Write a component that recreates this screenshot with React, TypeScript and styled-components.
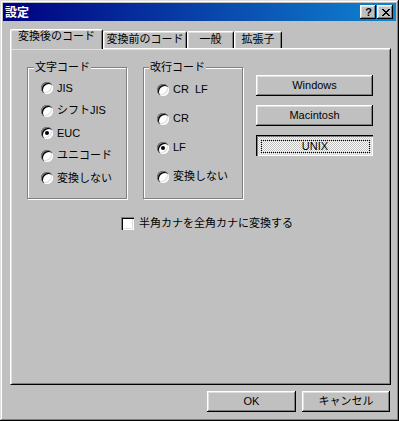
import React from "react";
import styled, { createGlobalStyle } from "styled-components";

const GlobalStyle = createGlobalStyle`
  html, body {
    margin: 0;
    padding: 0;
    background: #c0c0c0;
  }
  body {
    font-family: "Liberation Sans", "Noto Sans CJK JP", sans-serif;
    font-size: 11px;
    color: #000;
  }
`;

const Window = styled.div`
  width: 399px;
  height: 421px;
  box-sizing: border-box;
  padding: 3px;
  background: #c0c0c0;
  box-shadow: inset -1px -1px #000, inset 1px 1px #dfdfdf,
    inset -2px -2px #808080, inset 2px 2px #fff;
  display: flex;
  flex-direction: column;
`;

const TitleBar = styled.div`
  height: 18px;
  flex: none;
  display: flex;
  align-items: center;
  padding: 0 3px 0 2px;
  background: linear-gradient(90deg, #000080, #1084d0);
`;

const TitleText = styled.span`
  flex: 1;
  color: #fff;
  font-family: "Noto Sans CJK JP", sans-serif;
  font-weight: bold;
  font-size: 12px;
  line-height: 18px;
`;

const CaptionButtons = styled.div`
  display: flex;
  gap: 1px;
`;

const CaptionButton = styled.div`
  width: 16px;
  height: 14px;
  box-sizing: border-box;
  background: #c0c0c0;
  box-shadow: inset -1px -1px #000, inset 1px 1px #fff,
    inset -2px -2px #808080, inset 2px 2px #dfdfdf;
  display: flex;
  align-items: center;
  justify-content: center;
  font-family: "Liberation Sans", sans-serif;
  font-weight: bold;
  font-size: 11px;
  line-height: 14px;
  padding-left: 1px;
`;

const Body = styled.div`
  flex: 1;
  display: flex;
  flex-direction: column;
  padding: 8px 5px 0 7px;
`;

const TabStrip = styled.div`
  display: flex;
  align-items: flex-end;
  height: 20px;
  margin-bottom: -1px;
  position: relative;
  z-index: 1;
`;

const Tab = styled.div<{ $active?: boolean; $width: number }>`
  width: ${(p) => p.$width}px;
  height: ${(p) => (p.$active ? 20 : 17)}px;
  margin-bottom: ${(p) => (p.$active ? 0 : 1)}px;
  box-sizing: border-box;
  border-top: 1px solid #fff;
  border-left: 1px solid #fff;
  border-right: 1px solid #000;
  border-radius: 2px 2px 0 0;
  box-shadow: inset 1px 1px #dfdfdf, inset -1px 0 #808080;
  background: #c0c0c0;
  padding-top: ${(p) => (p.$active ? 0 : 1)}px;
  text-align: center;
  line-height: 13px;
  white-space: nowrap;
  position: relative;
  z-index: ${(p) => (p.$active ? 2 : 1)};
`;

const Panel = styled.div`
  height: 337px;
  flex: none;
  box-sizing: border-box;
  border-style: solid;
  border-width: 1px;
  border-color: #fff #000 #000 #fff;
  box-shadow: inset 1px 1px #dfdfdf, inset -1px -1px #808080;
  padding: 18px 0 0 16px;
`;

const TopRow = styled.div`
  display: flex;
  align-items: flex-start;
`;

const GroupBox = styled.div`
  position: relative;
  width: 100px;
  height: 132px;
  box-sizing: border-box;
  border: 1px solid #808080;
  box-shadow: inset 1px 1px #fff, 1px 1px #fff;

  & + & {
    margin-left: 16px;
  }
`;

const GroupTitle = styled.span<{ $left: number }>`
  position: absolute;
  top: -7px;
  left: ${(p) => p.$left}px;
  padding: 0 1px;
  background: #c0c0c0;
  line-height: 13px;
`;

const RadioList = styled.div<{ $row: number; $top: number }>`
  display: flex;
  flex-direction: column;
  padding: ${(p) => p.$top}px 0 0 ${13}px;

  & > * {
    height: ${(p) => p.$row}px;
  }
`;

const RadioRow = styled.label`
  display: flex;
  align-items: center;
  gap: 4px;
  line-height: 13px;
  white-space: nowrap;
`;

const RadioCircle = styled.span<{ $checked?: boolean }>`
  position: relative;
  width: 12px;
  height: 12px;
  flex: none;
  border-radius: 50%;
  background: #fff;
  box-shadow: inset 1px 1px #808080, inset 2px 2px #000,
    inset -1px -1px #fff, inset -2px -2px #dfdfdf;

  &::after {
    content: "";
    display: ${(p) => (p.$checked ? "block" : "none")};
    position: absolute;
    left: 4px;
    top: 4px;
    width: 4px;
    height: 4px;
    border-radius: 50%;
    background: #000;
  }
`;

const ButtonColumn = styled.div`
  display: flex;
  flex-direction: column;
  gap: 9px;
  margin: 8px 0 0 13px;
`;

const Button = styled.div<{ $width: number; $pressed?: boolean }>`
  width: ${(p) => p.$width}px;
  height: 21px;
  box-sizing: border-box;
  display: flex;
  align-items: center;
  justify-content: center;
  background-color: ${(p) => (p.$pressed ? "#fff" : "#c0c0c0")};
  background-image: ${(p) =>
    p.$pressed
      ? "repeating-conic-gradient(#c0c0c0 0% 25%, #fff 0% 50%)"
      : "none"};
  background-size: 2px 2px;
  box-shadow: ${(p) =>
    p.$pressed
      ? "inset 1px 1px #000, inset 2px 2px #808080, inset -1px -1px #fff, inset -2px -2px #dfdfdf"
      : "inset -1px -1px #000, inset 1px 1px #fff, inset -2px -2px #808080, inset 2px 2px #dfdfdf"};
  padding: ${(p) => (p.$pressed ? "1px 0 0 1px" : "0")};
  white-space: nowrap;
  line-height: 13px;
`;

const FocusRect = styled.span`
  box-sizing: border-box;
  width: calc(100% - 7px);
  height: calc(100% - 7px);
  border: 1px dotted #000;
  display: flex;
  align-items: center;
  justify-content: center;
`;

const CheckRow = styled.label`
  display: flex;
  align-items: center;
  gap: 5px;
  margin-top: 18px;
  padding-left: 94px;
  line-height: 13px;
`;

const CheckBox = styled.span`
  width: 13px;
  height: 13px;
  flex: none;
  box-sizing: border-box;
  background: #fff;
  box-shadow: inset 1px 1px #808080, inset 2px 2px #000,
    inset -1px -1px #fff, inset -2px -2px #dfdfdf;
`;

const Footer = styled.div`
  display: flex;
  justify-content: flex-end;
  gap: 6px;
  margin-top: 6px;
  padding-right: 1px;
`;

const charsets = ["JIS", "シフトJIS", "EUC", "ユニコード", "変換しない"];
const newlines = ["CR\u00a0\u00a0LF", "CR", "LF", "変換しない"];

function CloseGlyph() {
  return (
    <svg width="8" height="7" viewBox="0 0 8 7" shapeRendering="crispEdges">
      <path
        d="M0 0h2v1h-2zM6 0h2v1h-2zM1 1h2v1h-2zM5 1h2v1h-2zM2 2h4v1h-4zM3 3h2v1h-2zM2 4h4v1h-4zM1 5h2v1h-2zM5 5h2v1h-2zM0 6h2v1h-2zM6 6h2v1h-2z"
        fill="#000"
      />
    </svg>
  );
}

export default function App() {
  return (
    <>
      <GlobalStyle />
      <Window>
        <TitleBar>
          <TitleText>設定</TitleText>
          <CaptionButtons>
            <CaptionButton>?</CaptionButton>
            <CaptionButton>
              <CloseGlyph />
            </CaptionButton>
          </CaptionButtons>
        </TitleBar>
        <Body>
          <TabStrip>
            <Tab $active $width={93}>
              変換後のコード
            </Tab>
            <Tab $width={84}>変換前のコード</Tab>
            <Tab $width={47}>一般</Tab>
            <Tab $width={48}>拡張子</Tab>
          </TabStrip>
          <Panel>
            <TopRow>
              <GroupBox>
                <GroupTitle $left={6}>文字コード</GroupTitle>
                <RadioList $row={22.5} $top={9}>
                  {charsets.map((c) => (
                    <RadioRow key={c}>
                      <RadioCircle $checked={c === "EUC"} />
                      {c}
                    </RadioRow>
                  ))}
                </RadioList>
              </GroupBox>
              <GroupBox>
                <GroupTitle $left={5}>改行コード</GroupTitle>
                <RadioList $row={29} $top={7}>
                  {newlines.map((c) => (
                    <RadioRow key={c}>
                      <RadioCircle $checked={c === "LF"} />
                      {c}
                    </RadioRow>
                  ))}
                </RadioList>
              </GroupBox>
              <ButtonColumn>
                <Button $width={117}>Windows</Button>
                <Button $width={117}>Macintosh</Button>
                <Button $width={117} $pressed>
                  <FocusRect>UNIX</FocusRect>
                </Button>
              </ButtonColumn>
            </TopRow>
            <CheckRow>
              <CheckBox />
              半角カナを全角カナに変換する
            </CheckRow>
          </Panel>
          <Footer>
            <Button $width={89}>OK</Button>
            <Button $width={88}>キャンセル</Button>
          </Footer>
        </Body>
      </Window>
    </>
  );
}
